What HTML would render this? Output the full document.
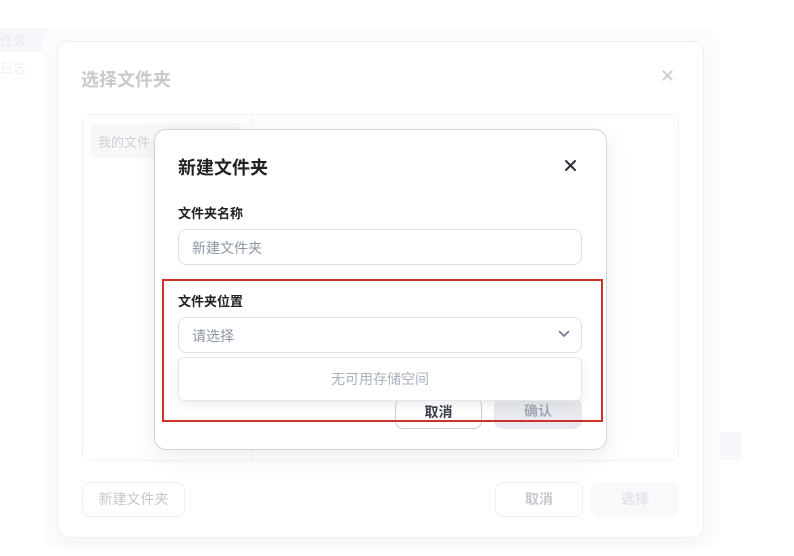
<!DOCTYPE html>
<html><head><meta charset="utf-8"><style>
*{box-sizing:border-box;margin:0;padding:0}
body{width:794px;height:556px;background:#fff;position:relative;overflow:hidden;font-family:"Liberation Sans","Noto Sans CJK SC",sans-serif}
.a{position:absolute}
</style></head><body>
<div class="a" style="left:0;top:28px;width:80px;height:24px;background:#f6f7fb"></div>
<div class="a" style="left:0;top:30px;font-size:13px;color:#e6e8ef">任务</div>
<div class="a" style="left:0;top:58px;font-size:13px;color:#eeeff3">日志</div>
<div class="a" style="left:42px;top:28px;width:678px;height:520px;border-radius:14px;background:#fcfcfd"></div>
<div class="a" style="left:57px;top:41px;width:647px;height:497px;border:1px solid #f0f0f2;border-radius:12px;background:#fff;box-shadow:0 4px 20px rgba(0,0,0,0.03)"></div>
<div class="a" style="left:81px;top:66px;font-size:18px;font-weight:bold;color:#c9c9cc">选择文件夹</div>
<div class="a" style="left:660px;top:66px;font-size:18px;color:#c9c9cc">✕</div>
<div class="a" style="left:82px;top:114px;width:597px;height:347px;border:1px solid #f2f2f4;border-radius:8px"></div>
<div class="a" style="left:252px;top:114px;width:1px;height:347px;background:#f2f2f4"></div>
<div class="a" style="left:90px;top:123px;width:152px;height:35px;background:#f7f8fa;border-radius:6px;font-size:13px;color:#cfd0d4;padding:9px 8px">我的文件</div>
<div class="a" style="left:720px;top:432px;width:22px;height:28px;background:#f7f8fc"></div>
<div class="a" style="left:82px;top:482px;width:103px;height:35px;border:1px solid #eeeff2;border-radius:8px;font-size:14px;color:#c6c8cd;text-align:center;line-height:33px">新建文件夹</div>
<div class="a" style="left:495px;top:482px;width:88px;height:35px;border:1px solid #eeeff2;border-radius:8px;font-size:14px;color:#c6c8cd;text-align:center;line-height:33px;font-weight:bold">取消</div>
<div class="a" style="left:591px;top:482px;width:88px;height:35px;background:#f8f9fb;border-radius:8px;font-size:14px;color:#e3e5ea;text-align:center;line-height:35px;font-weight:bold">选择</div>

<div class="a" style="left:154px;top:129px;width:453px;height:321px;border:1px solid #d4d4d6;border-radius:12px;background:#fff;box-shadow:0 6px 24px rgba(0,0,0,0.08)"></div>
<div class="a" style="left:178px;top:154px;font-size:18px;font-weight:bold;color:#222">新建文件夹</div>
<svg class="a" style="left:564px;top:159px" width="13" height="13" viewBox="0 0 13 13"><path d="M2 2L11 11M11 2L2 11" stroke="#2b2f38" stroke-width="2" stroke-linecap="round"/></svg>
<div class="a" style="left:178px;top:203px;font-size:13px;font-weight:bold;color:#222">文件夹名称</div>
<div class="a" style="left:178px;top:229px;width:404px;height:36px;border:1px solid #dde1e8;border-radius:8px;font-size:14px;color:#8e96a6;padding:8px 13px">新建文件夹</div>
<div class="a" style="left:178px;top:291px;font-size:13px;font-weight:bold;color:#222">文件夹位置</div>
<div class="a" style="left:178px;top:317px;width:404px;height:36px;border:1px solid #dde1e8;border-radius:8px;font-size:14px;color:#8e96a6;padding:8px 13px">请选择</div>
<svg class="a" style="left:558px;top:330px" width="12" height="8" viewBox="0 0 12 8"><path d="M1.5 1.5L6 6L10.5 1.5" stroke="#6f7787" stroke-width="1.6" fill="none" stroke-linecap="round"/></svg>
<div class="a" style="left:395px;top:398px;width:87px;height:31px;border:1px solid #c8ccd6;border-radius:8px;font-size:14px;font-weight:bold;color:#3a3f4a;text-align:center;line-height:27px">取消</div>
<div class="a" style="left:494px;top:398px;width:88px;height:31px;background:#e8eaef;border-radius:8px;font-size:14px;font-weight:bold;color:#a2aab8;text-align:center;line-height:27px">确认</div>
<div class="a" style="left:178px;top:357px;width:404px;height:44px;border:1px solid #e3e6ec;border-radius:6px;background:#fff;box-shadow:0 4px 12px rgba(0,0,0,0.08);font-size:14px;color:#a8b0bf;text-align:center;line-height:42px">无可用存储空间</div>
<div class="a" style="left:162px;top:279px;width:441px;height:143px;border:2px solid #d0302a"></div>
</body></html>
